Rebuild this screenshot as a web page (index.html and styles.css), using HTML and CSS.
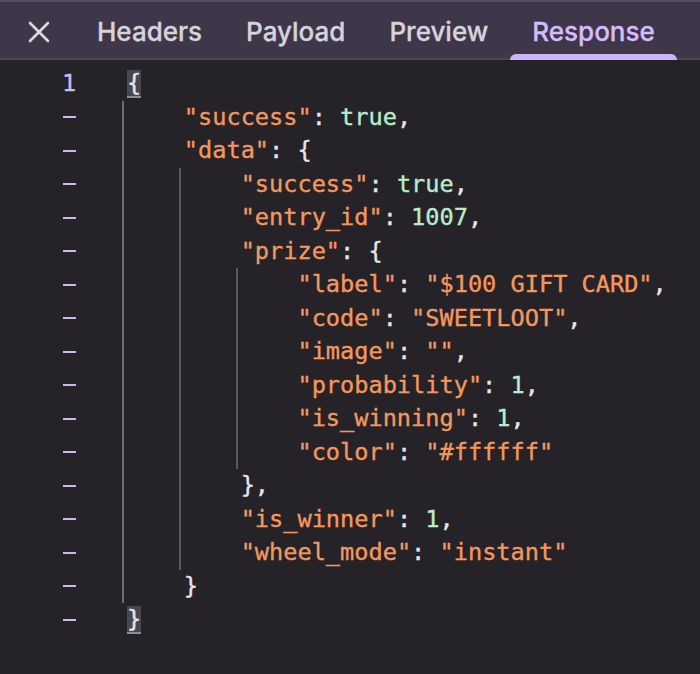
FILE: index.html
```html
<!DOCTYPE html>
<html>
<head>
<meta charset="utf-8">
<link rel="stylesheet" href="styles.css">
</head>
<body>
<div class="panel">
  <div class="tabbar">
    <button class="close" aria-label="Close">
      <svg width="22" height="22" viewBox="0 0 22 22"><path d="M2 2 L20 20 M20 2 L2 20" stroke="#dcd8e0" stroke-width="2.6" stroke-linecap="round"/></svg>
    </button>
    <div class="tab">Headers</div>
    <div class="tab">Payload</div>
    <div class="tab">Preview</div>
    <div class="tab active">Response</div>
  </div>
  <div class="editor">
    <div class="gutter">
      <div class="ln num">1</div>
      <div class="ln"><span class="dash"></span></div>
      <div class="ln"><span class="dash"></span></div>
      <div class="ln"><span class="dash"></span></div>
      <div class="ln"><span class="dash"></span></div>
      <div class="ln"><span class="dash"></span></div>
      <div class="ln"><span class="dash"></span></div>
      <div class="ln"><span class="dash"></span></div>
      <div class="ln"><span class="dash"></span></div>
      <div class="ln"><span class="dash"></span></div>
      <div class="ln"><span class="dash"></span></div>
      <div class="ln"><span class="dash"></span></div>
      <div class="ln"><span class="dash"></span></div>
      <div class="ln"><span class="dash"></span></div>
      <div class="ln"><span class="dash"></span></div>
      <div class="ln"><span class="dash"></span></div>
      <div class="ln"><span class="dash"></span></div>
    </div>
    <div class="code">
      <div class="line"><span class="match">{</span></div>
      <div class="block first">
        <div class="line"><span class="s">"success"</span><span class="p">: </span><span class="v">true</span><span class="p">,</span></div>
        <div class="line"><span class="s">"data"</span><span class="p">: {</span></div>
        <div class="block">
          <div class="line"><span class="s">"success"</span><span class="p">: </span><span class="v">true</span><span class="p">,</span></div>
          <div class="line"><span class="s">"entry_id"</span><span class="p">: </span><span class="v">1007</span><span class="p">,</span></div>
          <div class="line"><span class="s">"prize"</span><span class="p">: {</span></div>
          <div class="block">
            <div class="line"><span class="s">"label"</span><span class="p">: </span><span class="s">"$100 GIFT CARD"</span><span class="p">,</span></div>
            <div class="line"><span class="s">"code"</span><span class="p">: </span><span class="s">"SWEETLOOT"</span><span class="p">,</span></div>
            <div class="line"><span class="s">"image"</span><span class="p">: </span><span class="s">""</span><span class="p">,</span></div>
            <div class="line"><span class="s">"probability"</span><span class="p">: </span><span class="v">1</span><span class="p">,</span></div>
            <div class="line"><span class="s">"is_winning"</span><span class="p">: </span><span class="v">1</span><span class="p">,</span></div>
            <div class="line"><span class="s">"color"</span><span class="p">: </span><span class="s">"#ffffff"</span></div>
          </div>
          <div class="line"><span class="p">},</span></div>
          <div class="line"><span class="s">"is_winner"</span><span class="p">: </span><span class="v">1</span><span class="p">,</span></div>
          <div class="line"><span class="s">"wheel_mode"</span><span class="p">: </span><span class="s">"instant"</span></div>
        </div>
        <div class="line"><span class="p">}</span></div>
      </div>
      <div class="line"><span class="match">}</span></div>
    </div>
  </div>
</div>
</body>
</html>
```
FILE: styles.css
```css
html, body {
  margin: 0;
  padding: 0;
  background: #252328;
}
.panel {
  width: 700px;
  height: 674px;
  overflow: hidden;
  background: #252328;
}
.tabbar {
  height: 56px;
  border-top: 2px solid #56505f;
  border-bottom: 2px solid #4c4755;
  background: #3e3649;
  display: flex;
  align-items: stretch;
  font-family: Inter, "Noto Sans", sans-serif;
  font-size: 26px;
  font-weight: 500;
  color: #d7d3dc;
  -webkit-text-stroke: 0.3px currentColor;
}
.close {
  background: none;
  border: 0;
  padding: 0 0 0 28px;
  margin: 0;
  width: 75px;
  display: flex;
  align-items: center;
  justify-content: flex-start;
}
.close svg { display: block; margin-top: 4px; }
.tab {
  padding: 0 22px;
  display: flex;
  align-items: center;
  padding-top: 2px;
  position: relative;
}
.tab.active {
  color: #d5bcfb;
}
.tab.active::after {
  content: "";
  position: absolute;
  left: 0;
  right: 0;
  bottom: -2px;
  height: 6px;
  background: #cdb5fb;
  border-radius: 6px 6px 0 0;
}
.editor {
  display: flex;
  padding-top: 7px;
  font-family: "DejaVu Sans Mono", "Liberation Mono", monospace;
  font-size: 23.6px;
  line-height: 33.5px;
  -webkit-text-stroke: 0.35px currentColor;
}
.gutter {
  width: 127px;
  padding-left: 62px;
  box-sizing: border-box;
}
.ln {
  height: 33.5px;
  display: flex;
  align-items: center;
}
.num {
  color: #cbb8f5;
}
.dash {
  display: block;
  width: 13px;
  height: 2px;
  margin-left: 1px;
  background: #cbb8f5;
}
.code {
  color: #e6e6e8;
}
.line {
  height: 33.5px;
  white-space: pre;
}
.block {
  margin-left: -5px;
  border-left: 2px solid #5b5767;
  padding-left: calc(4ch + 3px);
}
.block.first {
  border-left-color: #6d6b73;
}
.s { color: #f4975f; }
.v { color: #b9ecca; }
.p { color: #e6e6e8; }
.match {
  display: inline-block;
  line-height: 26px;
  background: #48464e;
  border-bottom: 2px solid #8d8b93;
  vertical-align: top;
  margin-top: 3px;
}
```
